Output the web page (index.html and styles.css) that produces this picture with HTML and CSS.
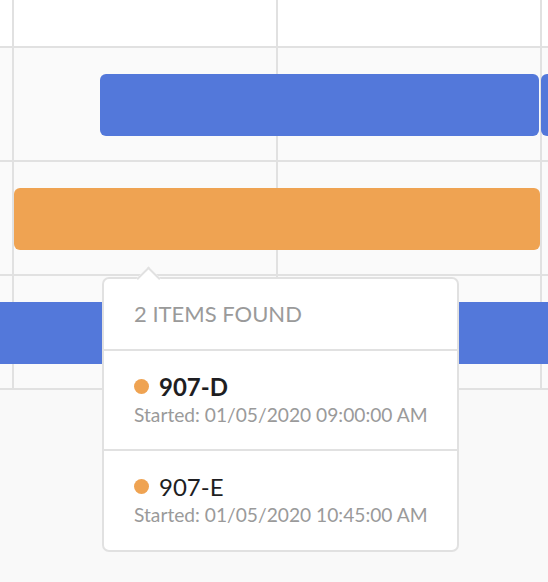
FILE: index.html
```html
<!DOCTYPE html>
<html>
<head>
<meta charset="utf-8">
<link rel="stylesheet" href="styles.css">
</head>
<body>
<div class="chart">
  <div class="grid">
    <div class="cell head"></div><div class="cell head"></div><div class="cell head"></div><div class="cell head"></div>
    <div class="cell"></div><div class="cell"></div><div class="cell"></div><div class="cell"></div>
    <div class="cell"></div><div class="cell"></div><div class="cell"></div><div class="cell"></div>
    <div class="cell"></div><div class="cell"></div><div class="cell"></div><div class="cell"></div>
  </div>
  <div class="bar blue bar-a"></div>
  <div class="bar blue bar-b"></div>
  <div class="bar orange bar-c"></div>
  <div class="bar blue bar-d"></div>

  <div class="tooltip">
    <div class="arrow"></div>
    <div class="tip-head">2 ITEMS FOUND</div>
    <div class="tip-item">
      <div class="tip-title"><span class="dot"></span>907-D</div>
      <div class="tip-sub">Started: 01/05/2020 09:00:00 AM</div>
    </div>
    <div class="tip-item last">
      <div class="tip-title normal"><span class="dot"></span>907-E</div>
      <div class="tip-sub">Started: 01/05/2020 10:45:00 AM</div>
    </div>
  </div>
</div>
</body>
</html>
```

FILE: styles.css
```css
html, body {
  margin: 0;
  padding: 0;
  background: #f9f9f9;
  font-family: Lato, "Open Sans", sans-serif;
}

.chart {
  position: relative;
  width: 548px;
  height: 582px;
  overflow: hidden;
}

.grid {
  display: grid;
  grid-template-columns: 12px 262px 262px 1fr;
  grid-template-rows: 46px 112px 112px 112px;
  gap: 2px;
  background: #e1e1e1;
  border-bottom: 2px solid #e1e1e1;
}

.cell {
  background: #fafafa;
}

.cell.head {
  background: #ffffff;
}

.bar {
  position: absolute;
  height: 62px;
  border-radius: 6px;
}

.blue { background: #5378da; }
.orange { background: #efa352; }

.bar-a { left: 100px; top: 74px; width: 439px; }
.bar-b { left: 541px; top: 74px; width: 40px; }
.bar-c { left: 14px; top: 188px; width: 526px; }
.bar-d { left: -20px; top: 302px; width: 600px; border-radius: 0; }

.tooltip {
  position: absolute;
  left: 102px;
  top: 277px;
  width: 353px;
  background: #ffffff;
  border: 2px solid #e1e1e1;
  border-radius: 7px;
}

.arrow {
  position: absolute;
  left: 36px;
  top: -9px;
  width: 15px;
  height: 15px;
  background: #ffffff;
  border-left: 2px solid #e1e1e1;
  border-top: 2px solid #e1e1e1;
  transform: rotate(45deg);
}

.tip-head {
  position: relative;
  padding: 22px 30px 22px;
  font-size: 22px;
  line-height: 26px;
  color: #9a9a9a;
  border-bottom: 2px solid #e1e1e1;
  white-space: nowrap;
}

.tip-item {
  padding: 21px 30px 22px;
  border-bottom: 2px solid #e1e1e1;
}

.tip-item.last {
  border-bottom: none;
  padding-bottom: 23px;
}

.tip-title {
  display: flex;
  align-items: center;
  font-size: 24px;
  line-height: 29px;
  font-weight: 700;
  color: #1e1e22;
}

.tip-title.normal {
  font-weight: 400;
}

.dot {
  width: 15px;
  height: 15px;
  border-radius: 50%;
  background: #efa352;
  margin-right: 10px;
  flex: none;
}

.tip-sub {
  margin-top: 2px;
  font-size: 19.2px;
  line-height: 24px;
  color: #9a9a9a;
  white-space: nowrap;
}
```
